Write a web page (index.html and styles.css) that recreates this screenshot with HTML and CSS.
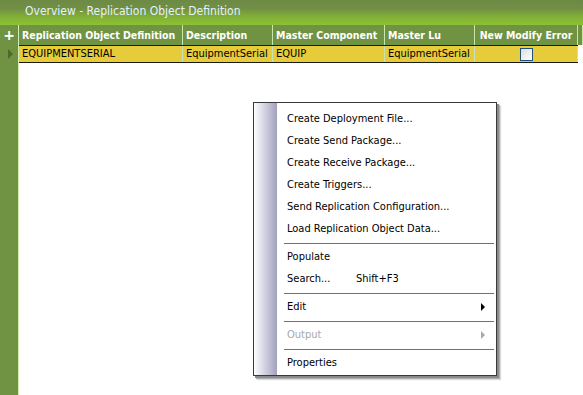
FILE: index.html
```html
<!DOCTYPE html>
<html lang="en">
<head>
<meta charset="utf-8">
<title>Overview - Replication Object Definition</title>
<link rel="stylesheet" href="styles.css">
</head>
<body>
<div class="window">
	<div class="titlebar">Overview - Replication Object Definition</div>

	<div class="grid">
		<div class="gutter">
			<div class="gutter-head">+</div>
			<div class="gutter-row"><span class="row-arrow"></span></div>
		</div>
		<div class="sheet">
			<div class="head-row">
				<div class="cell c1">Replication Object Definition</div>
				<div class="cell c2">Description</div>
				<div class="cell c3">Master Component</div>
				<div class="cell c4">Master Lu</div>
				<div class="cell c5 center">New Modify Error</div>
				<div class="cell rest"></div>
			</div>
			<div class="data-row">
				<div class="cell c1">EQUIPMENTSERIAL</div>
				<div class="cell c2">EquipmentSerial</div>
				<div class="cell c3">EQUIP</div>
				<div class="cell c4">EquipmentSerial</div>
				<div class="cell c5 center"><span class="check"></span></div>
			</div>
		</div>
	</div>

	<div class="menu">
		<div class="menu-strip"></div>
		<ul class="menu-items">
			<li>Create Deployment File...</li>
			<li>Create Send Package...</li>
			<li>Create Receive Package...</li>
			<li>Create Triggers...</li>
			<li>Send Replication Configuration...</li>
			<li>Load Replication Object Data...</li>
			<li class="sep"></li>
			<li>Populate</li>
			<li><span class="label">Search...</span><span class="key">Shift+F3</span></li>
			<li class="sep"></li>
			<li class="sub">Edit</li>
			<li class="sep"></li>
			<li class="sub disabled">Output</li>
			<li class="sep"></li>
			<li>Properties</li>
		</ul>
	</div>
</div>
</body>
</html>
```

FILE: styles.css
```css
body {
	margin: 0;
	font-family: "DejaVu Sans Condensed", "DejaVu Sans", sans-serif;
	font-size: 11px;
	background: #fff;
}
.window {
	position: relative;
	width: 583px;
	height: 395px;
	overflow: hidden;
	display: flex;
	flex-direction: column;
}
.titlebar {
	height: 25px;
	box-sizing: border-box;
	padding: 4px 0 0 25px;
	font-size: 12px;
	color: #e4f2ff;
	background: linear-gradient(#6c8a46 0%, #728f44 35%, #84b236 70%, #8dc136 100%);
}
.grid {
	flex: 1;
	display: flex;
}
.gutter {
	width: 18px;
	background: #6f9343;
	border-right: 1px solid #d4ecae;
}
.gutter-head {
	height: 20px;
	color: #fff;
	font-family: "DejaVu Sans", sans-serif;
	font-weight: bold;
	font-size: 14px;
	line-height: 20px;
	text-align: center;
}
.gutter-row {
	height: 18px;
	display: flex;
	align-items: center;
	justify-content: center;
}
.row-arrow {
	width: 0;
	height: 0;
	border-top: 5px solid transparent;
	border-bottom: 5px solid transparent;
	border-left: 5px solid #4d6a2c;
	margin-left: 2px;
}
.sheet {
	flex: 1;
}
.head-row, .data-row {
	display: flex;
}
.head-row {
	height: 20px;
	background: #6f9343;
	color: #fff;
	font-weight: bold;
	font-size: 10.5px;
}
.head-row .cell {
	line-height: 20px;
	border-right: 1px solid #c8e6a4;
}
.cell {
	box-sizing: border-box;
	padding-left: 3px;
	white-space: nowrap;
	overflow: hidden;
}
.c1 { width: 164px; }
.c2 { width: 90px; }
.c3 { width: 112px; }
.c4 { width: 90px; }
.c5 { width: 103px; }
.rest { flex: 1; }
.center {
	text-align: center;
	padding-left: 0;
}
.data-row {
	width: 559px;
	height: 18px;
	box-sizing: border-box;
	border-top: 1px solid #1a1a10;
	border-bottom: 1px solid #1a1a10;
	background: #e6cb3a;
	color: #000;
}
.data-row .cell {
	line-height: 16px;
	border-right: 1px solid #c6e3b8;
}
.check {
	display: inline-block;
	width: 11px;
	height: 11px;
	margin-top: 2px;
	vertical-align: top;
	border: 1px solid #1c5180;
	background: linear-gradient(135deg, #dcdcd6, #fff);
}
.menu {
	position: absolute;
	left: 253px;
	top: 102px;
	width: 244px;
	box-sizing: border-box;
	border: 1px solid #3a3a3a;
	background: #fff;
	display: flex;
	box-shadow: 2px 2px 0 #8a8a8a, 3px 3px 0 #b0b0b0, 4px 4px 1px #d8d8d8;
}
.menu-strip {
	width: 23px;
	background: linear-gradient(90deg, #fdfdff, #d8d8e8 40%, #a2a0bc);
}
.menu-items {
	flex: 1;
	list-style: none;
	margin: 0;
	padding: 5px 2px 1px 0;
}
.menu-items li {
	height: 22px;
	line-height: 22px;
	padding-left: 10px;
	color: #000;
	position: relative;
}
.menu-items .sep {
	height: 6px;
	padding: 0;
	margin-left: 7px;
	border-top: 1px solid #6e6e86;
	box-sizing: border-box;
	transform: translateY(3px);
}
.menu-items .label {
	display: inline-block;
	width: 69px;
}
.sub::after {
	content: "";
	position: absolute;
	right: 9px;
	top: 7px;
	border-top: 4px solid transparent;
	border-bottom: 4px solid transparent;
	border-left: 4px solid #000;
}
.menu-items .disabled {
	color: #a8a8a8;
}
.disabled::after {
	border-left-color: #a8a8a8;
}
```
